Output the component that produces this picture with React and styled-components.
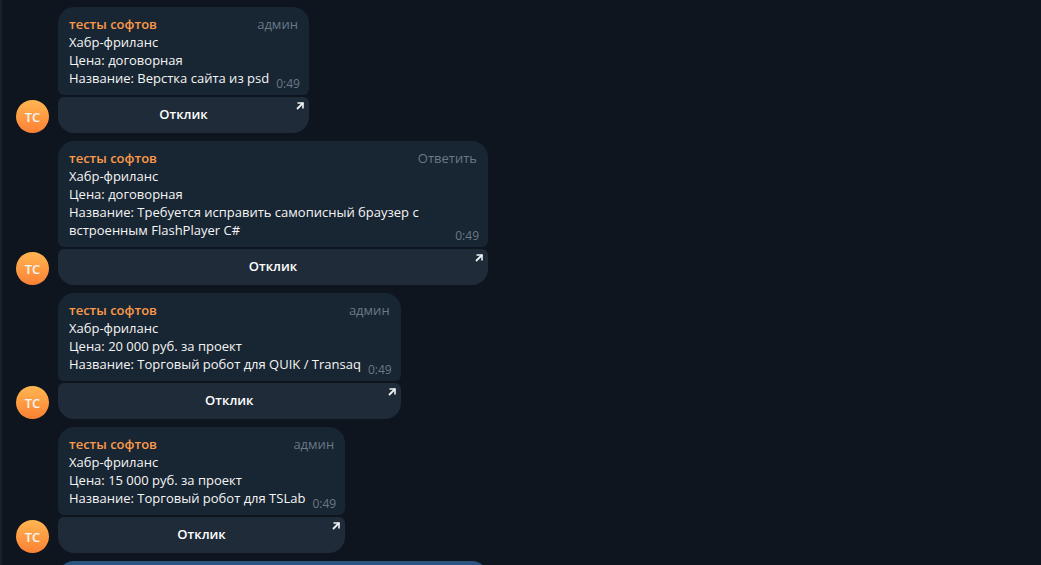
import React from "react";
import styled, { createGlobalStyle } from "styled-components";

const GlobalStyle = createGlobalStyle`
  body {
    margin: 0;
    background-color: #0e151f;
    font-family: "Open Sans", "Noto Sans", sans-serif;
    font-size: 13px;
    line-height: 18px;
    color: #f5f5f5;
  }
`

const ChatSt = styled.main`
  box-sizing: border-box;
  height: 100vh;
  overflow: hidden;
  padding: 7px 14px 0;
  border-left: 2px solid #17202b;
  display: flex;
  flex-direction: column;
  gap: 8px;
`

const MessageSt = styled.article`
  display: flex;
  flex-shrink: 0;
  align-items: flex-end;
  gap: 9px;
`

const AvatarSt = styled.div`
  width: 33px;
  height: 33px;
  flex-shrink: 0;
  border-radius: 50%;
  background: linear-gradient(#ffb651, #fc8134);
  font-weight: 600;
  line-height: 35px;
  text-align: center;
`

const ContentSt = styled.div`
  max-width: 430px;
  display: flex;
  flex-direction: column;
  gap: 2px;
`

const BubbleSt = styled.div`
  padding: 8px 9px 8px 11px;
  border-radius: 16px 16px 6px 6px;
  background-color: #182532;
`

const HeaderSt = styled.header`
  display: flex;
  justify-content: space-between;
  padding-right: 2px;
`

const AuthorSt = styled.span`
  font-weight: 600;
  color: #fb9a4b;
`

const MutedSt = styled.span`
  color: #6a7987;
`

const BodySt = styled.div`
  display: flex;
  justify-content: space-between;
  align-items: flex-end;
  gap: 7px;
`

const TextSt = styled.p`
  margin: 0;
  white-space: pre-line;
`

const TimeSt = styled.time`
  font-size: 12px;
  line-height: 6px;
  color: #6a7987;
`

const ButtonSt = styled.button`
  position: relative;
  height: 36px;
  padding: 0 0 2px;
  border: none;
  border-radius: 6px 6px 16px 16px;
  background-color: #1f2b38;
  font: inherit;
  font-weight: 600;
  color: #ffffff;
  cursor: pointer;

  &:hover {
    background-color: #263443;
  }
`

const ArrowSt = styled.svg`
  position: absolute;
  top: 5px;
  right: 5px;
  width: 8px;
  height: 8px;
`

const OwnBubbleSt = styled.div`
  box-sizing: border-box;
  width: 430px;
  max-width: 100%;
  height: 88px;
  flex-shrink: 0;
  margin-left: 42px;
  border-radius: 16px;
  background-color: #2b5480;
`

const messages = [
  {
    id: 1,
    label: "админ",
    text: "Хабр-фриланс\nЦена: договорная\nНазвание: Верстка сайта из psd",
  },
  {
    id: 2,
    label: "Ответить",
    text: "Хабр-фриланс\nЦена: договорная\nНазвание: Требуется исправить самописный браузер с встроенным FlashPlayer C#",
  },
  {
    id: 3,
    label: "админ",
    text: "Хабр-фриланс\nЦена: 20 000 руб. за проект\nНазвание: Торговый робот для QUIK / Transaq",
  },
  {
    id: 4,
    label: "админ",
    text: "Хабр-фриланс\nЦена: 15 000 руб. за проект\nНазвание: Торговый робот для TSLab",
  },
];

const Message = ({ label, text }) => (
  <MessageSt>
    <AvatarSt>ТС</AvatarSt>
    <ContentSt>
      <BubbleSt>
        <HeaderSt>
          <AuthorSt>тесты софтов</AuthorSt>
          <MutedSt>{label}</MutedSt>
        </HeaderSt>
        <BodySt>
          <TextSt>{text}</TextSt>
          <TimeSt>0:49</TimeSt>
        </BodySt>
      </BubbleSt>
      <ButtonSt type="button">
        Отклик
        <ArrowSt viewBox="0 0 8 8" fill="none" stroke="#f0f3f6" aria-hidden="true">
          <path d="M1.5 1H7V6.5" strokeWidth="1.6" />
          <path d="M7 1L1 7" strokeWidth="1.8" />
        </ArrowSt>
      </ButtonSt>
    </ContentSt>
  </MessageSt>
);

export default function App() {
  return (
    <>
      <GlobalStyle />
      <ChatSt>
        {messages.map((message) => (
          <Message key={ message.id } label={ message.label } text={ message.text } />
        ))}
        <OwnBubbleSt />
      </ChatSt>
    </>
  );
}
